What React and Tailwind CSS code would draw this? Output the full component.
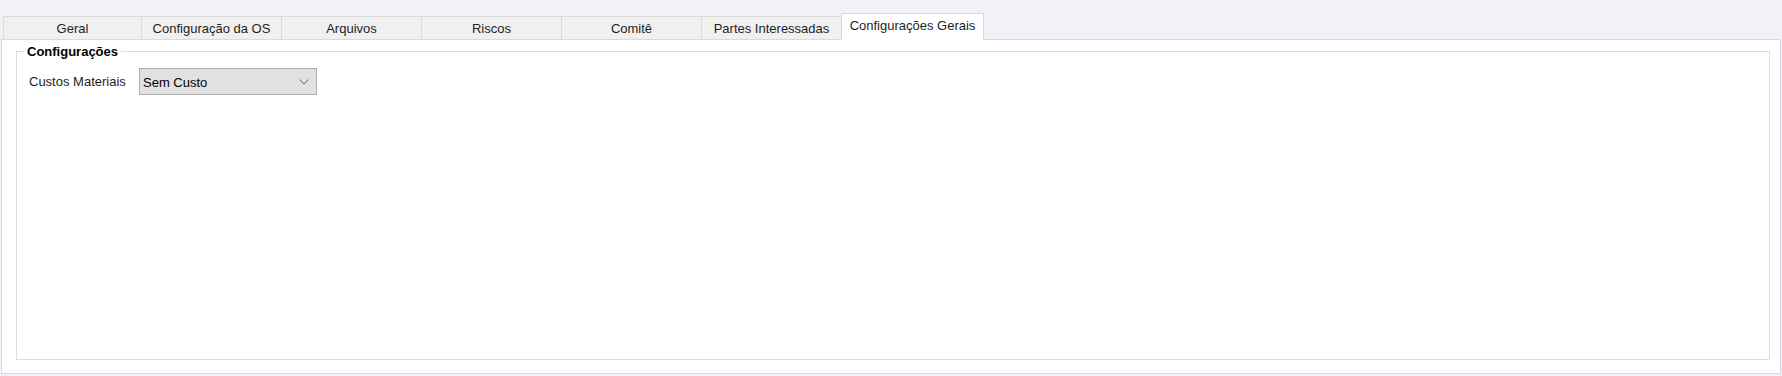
import React from "react";

const tabs = [
  "Geral",
  "Configuração da OS",
  "Arquivos",
  "Riscos",
  "Comitê",
  "Partes Interessadas",
];

export default function App() {
  return (
    <div
      className="w-[1782px] h-[376px] bg-[#f1f2f7] pt-[13px] pb-[2px] px-[1px] flex flex-col text-[13px] text-[#1e1e1e]"
      style={{ fontFamily: '"Liberation Sans", Arial, sans-serif' }}
    >
      <div className="flex items-end ml-[2px] h-[26px] relative z-10">
        {tabs.map((t, i) => (
          <div
            key={t}
            className={`h-[23px] ${
              i === 0 ? "w-[138px]" : "w-[140px]"
            } bg-[#f0f0f0] border-t border-l border-[#dadada] flex items-center justify-center leading-none`}
          >
            {t}
          </div>
        ))}
        <div className="h-[27px] -mb-px w-[143px] bg-white border border-b-0 border-[#dadada] flex items-center justify-center leading-none pb-[3px]">
          Configurações Gerais
        </div>
      </div>
      <div className="flex-1 bg-white border border-[#dadada] pl-[14px] pr-[10px] pt-[4px] pb-[13px] flex flex-col">
        <fieldset className="flex-1 border border-[#dcdcdc]">
          <legend className="ml-[7px] px-[3px] font-bold text-[13px] leading-[15px] text-black">
            Configurações
          </legend>
          <div className="flex items-center pl-[12px] pt-[9px]">
            <span className="w-[110px] text-[#1e1e1e]">Custos Materiais</span>
            <div className="w-[178px] h-[27px] bg-[#e1e1e1] border border-[#adadad] flex items-center justify-between pl-[3px] pr-[7px] text-black">
              <span className="pt-[2px]">Sem Custo</span>
              <svg width="10" height="6" viewBox="0 0 10 6" fill="none">
                <path d="M0.5 0.5 L5 5 L9.5 0.5" stroke="#6b6b6b" strokeWidth="1" />
              </svg>
            </div>
          </div>
        </fieldset>
      </div>
    </div>
  );
}
